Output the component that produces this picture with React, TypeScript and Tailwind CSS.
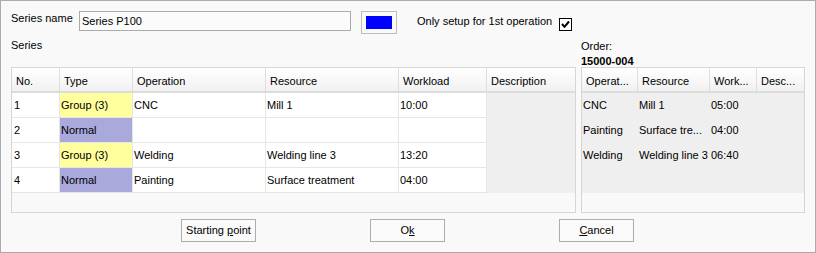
import React from "react";

const leftCols = [
  { name: "No.", w: "w-[48px]" },
  { name: "Type", w: "w-[73px]" },
  { name: "Operation", w: "w-[133px]" },
  { name: "Resource", w: "w-[133px]" },
  { name: "Workload", w: "w-[88px]" },
  { name: "Description", w: "w-[88px]" },
];

const rightCols = [
  { name: "Operat...", w: "w-[56px]" },
  { name: "Resource", w: "w-[72px]" },
  { name: "Work...", w: "w-[47px]" },
  { name: "Desc...", w: "w-[47px]" },
];

const leftRows = [
  { no: "1", type: "Group (3)", group: true, op: "CNC", res: "Mill 1", wl: "10:00" },
  { no: "2", type: "Normal", group: false, op: "", res: "", wl: "" },
  { no: "3", type: "Group (3)", group: true, op: "Welding", res: "Welding line 3", wl: "13:20" },
  { no: "4", type: "Normal", group: false, op: "Painting", res: "Surface treatment", wl: "04:00" },
];

const rightRows = [
  { op: "CNC", res: "Mill 1", wl: "05:00" },
  { op: "Painting", res: "Surface tre...", wl: "04:00" },
  { op: "Welding", res: "Welding line 3", wl: "06:40" },
];

function HeaderCell({ name, w, last }: { name: string; w: string; last?: boolean }) {
  return (
    <div
      className={`${w} h-full shrink-0 pl-[4px] pt-[7px] whitespace-nowrap overflow-hidden ${
        last ? "" : "border-r border-[#dfdfdf]"
      }`}
    >
      {name}
    </div>
  );
}

export default function App() {
  return (
    <div className="w-[816px] h-[253px] border border-[#acacac] bg-[#f9f9f9] flex flex-col text-[11px] leading-[13px] text-black font-['Liberation_Sans',Arial,sans-serif]">
      {/* Top row */}
      <div className="flex items-start pl-[10px] pt-[10px] h-[33px] shrink-0">
        <span className="w-[68px] mt-[1px] whitespace-nowrap">Series name</span>
        <div className="w-[272px] h-[20px] border border-[#ababab] bg-[#fbfbfb] flex items-center pl-[2px]">
          Series P100
        </div>
        <div className="ml-[10px] w-[36px] h-[23px] border border-[#bcbcbc] flex items-center justify-center">
          <div className="w-[26px] h-[13px] bg-[#0000ff]" />
        </div>
        <span className="ml-[20px] mt-[4px] w-[142px] whitespace-nowrap">Only setup for 1st operation</span>
        <div className="mt-[7px] w-[13px] h-[13px] border border-black bg-white flex items-center justify-center">
          <svg width="11" height="11" viewBox="0 0 11 11">
            <path d="M2 5 L4.5 7.8 L9 2.5" fill="none" stroke="#000" strokeWidth="2" />
          </svg>
        </div>
      </div>

      {/* Body */}
      <div className="flex pl-[10px] gap-[5px] shrink-0">
        {/* Left column */}
        <div className="w-[565px] flex flex-col">
          <div className="h-[33px] pt-[5px]">Series</div>
          <div className="h-[146px] border border-[#d6d6d6] bg-[#f9f9f9] flex flex-col">
            <div className="flex h-[25px] shrink-0 border-b-2 border-[#dcdcdc] bg-gradient-to-b from-[#ffffff] to-[#f1f1f1]">
              {leftCols.map((c, i) => (
                <HeaderCell key={c.name} name={c.name} w={c.w} last={i === leftCols.length - 1} />
              ))}
            </div>
            {leftRows.map((r) => (
              <div key={r.no} className="flex h-[25px] shrink-0">
                <div className="w-[48px] h-full bg-white border-r border-b border-[#e6e6e6] flex items-center pl-[2px]">
                  {r.no}
                </div>
                <div
                  className={`w-[73px] h-full border-r border-b border-[#e6e6e6] flex items-center pl-[1px] ${
                    r.group ? "bg-[#ffff9e]" : "bg-[#a9a9dc]"
                  }`}
                >
                  {r.type}
                </div>
                <div className="w-[133px] h-full bg-white border-r border-b border-[#e6e6e6] flex items-center pl-[1px]">
                  {r.op}
                </div>
                <div className="w-[133px] h-full bg-white border-r border-b border-[#e6e6e6] flex items-center pl-[1px]">
                  {r.res}
                </div>
                <div className="w-[88px] h-full bg-white border-r border-b border-[#e6e6e6] flex items-center pl-[1px]">
                  {r.wl}
                </div>
                <div className="w-[88px] h-full bg-[#efefef]" />
              </div>
            ))}
          </div>
        </div>

        {/* Right column */}
        <div className="w-[224px] flex flex-col">
          <div className="h-[33px] pt-[6px] leading-[13px]">
            <div>Order:</div>
            <div className="mt-[2px] font-bold leading-[12px]">15000-004</div>
          </div>
          <div className="h-[146px] border border-[#d6d6d6] bg-[#f9f9f9] flex flex-col">
            <div className="flex h-[25px] shrink-0 border-b-2 border-[#dcdcdc] bg-gradient-to-b from-[#ffffff] to-[#f1f1f1]">
              {rightCols.map((c, i) => (
                <HeaderCell key={c.name} name={c.name} w={c.w} last={i === rightCols.length - 1} />
              ))}
            </div>
            <div className="h-[100px] bg-[#efefef] flex flex-col shrink-0">
              {rightRows.map((r) => (
                <div key={r.op} className="flex h-[25px] items-center">
                  <div className="w-[56px] pl-[1px] whitespace-nowrap overflow-hidden">{r.op}</div>
                  <div className="w-[72px] pl-[1px] whitespace-nowrap overflow-hidden">{r.res}</div>
                  <div className="w-[47px] pl-[1px] whitespace-nowrap overflow-hidden">{r.wl}</div>
                  <div className="w-[47px]" />
                </div>
              ))}
            </div>
          </div>
        </div>
      </div>

      {/* Buttons */}
      <div className="flex gap-[114px] mt-[6px] pl-[180px]">
        <button className="w-[75px] h-[23px] border border-[#adadad] bg-[#fafafa] flex items-center justify-center">
          <span>
            Starting <span className="underline">p</span>oint
          </span>
        </button>
        <button className="w-[75px] h-[23px] border border-[#adadad] bg-[#fafafa] flex items-center justify-center">
          <span>
            O<span className="underline">k</span>
          </span>
        </button>
        <button className="w-[75px] h-[23px] border border-[#adadad] bg-[#fafafa] flex items-center justify-center">
          <span>
            <span className="underline">C</span>ancel
          </span>
        </button>
      </div>
    </div>
  );
}
